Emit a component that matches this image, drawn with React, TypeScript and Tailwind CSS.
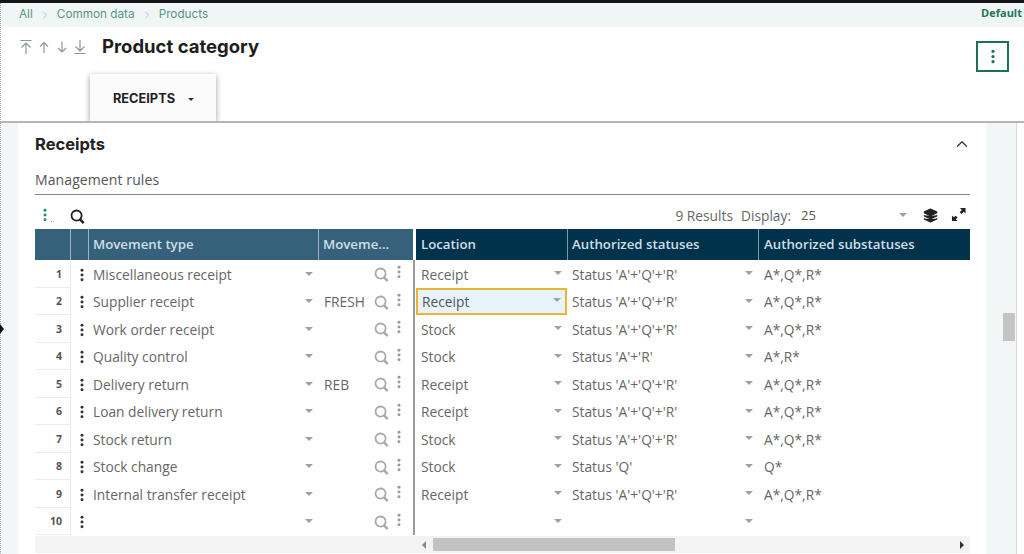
import { ChevronRight, ChevronUp, Layers } from "lucide-react";

const rows = [
  { n: 1, type: "Miscellaneous receipt", code: "", loc: "Receipt", status: "Status 'A'+'Q'+'R'", sub: "A*,Q*,R*" },
  { n: 2, type: "Supplier receipt", code: "FRESH", loc: "Receipt", status: "Status 'A'+'Q'+'R'", sub: "A*,Q*,R*" },
  { n: 3, type: "Work order receipt", code: "", loc: "Stock", status: "Status 'A'+'Q'+'R'", sub: "A*,Q*,R*" },
  { n: 4, type: "Quality control", code: "", loc: "Stock", status: "Status 'A'+'R'", sub: "A*,R*" },
  { n: 5, type: "Delivery return", code: "REB", loc: "Receipt", status: "Status 'A'+'Q'+'R'", sub: "A*,Q*,R*" },
  { n: 6, type: "Loan delivery return", code: "", loc: "Receipt", status: "Status 'A'+'Q'+'R'", sub: "A*,Q*,R*" },
  { n: 7, type: "Stock return", code: "", loc: "Stock", status: "Status 'A'+'Q'+'R'", sub: "A*,Q*,R*" },
  { n: 8, type: "Stock change", code: "", loc: "Stock", status: "Status 'Q'", sub: "Q*" },
  { n: 9, type: "Internal transfer receipt", code: "", loc: "Receipt", status: "Status 'A'+'Q'+'R'", sub: "A*,Q*,R*" },
  { n: 10, type: "", code: "", loc: "", status: "", sub: "" },
];

function Dots({ className }: { className: string }) {
  return (
    <svg viewBox="0 0 4 16" className={className} fill="currentColor">
      <circle cx="2" cy="2.5" r="1.7" />
      <circle cx="2" cy="8" r="1.7" />
      <circle cx="2" cy="13.5" r="1.7" />
    </svg>
  );
}

function Magnifier({ className }: { className: string }) {
  return (
    <svg viewBox="0 0 16 16" className={className} fill="none" stroke="currentColor">
      <circle cx="7" cy="7" r="5.4" strokeWidth="1.9" />
      <path d="M10.8 11 L14.6 15" strokeWidth="2.6" />
    </svg>
  );
}

function Caret({ className = "" }: { className?: string }) {
  return <span className={`h-0 w-0 border-x-[4.5px] border-t-[4.5px] border-x-transparent border-t-[#a0a0a0] ${className}`} />;
}

function ArrowIcon({ d }: { d: string }) {
  return (
    <svg viewBox="0 0 14 16" className="h-4 w-[14px] text-[#8a9a96]" fill="none" stroke="currentColor" strokeWidth="1.2">
      <path d={d} />
    </svg>
  );
}

export default function App() {
  return (
    <div className="relative h-[554px] w-[1024px] overflow-hidden bg-white font-['Open_Sans',sans-serif]">
      {/* barra superior */}
      <div className="h-[3px] bg-[#141414]" />
      <div className="flex h-[24px] items-center justify-between bg-[#f0f5f5] pl-[19px] pr-[2px] font-['Inter',sans-serif] text-[11.75px] text-[#5b9684]">
        <div className="flex items-center">
          <span>All</span>
          <ChevronRight className="mx-[6px] h-3 w-3 text-[#a9b6b2]" strokeWidth={1.5} />
          <span>Common data</span>
          <ChevronRight className="mx-[6px] h-3 w-3 text-[#a9b6b2]" strokeWidth={1.5} />
          <span>Products</span>
        </div>
        <span className="mb-[4px] font-['Open_Sans',sans-serif] text-[11px] font-bold text-[#1f7558]">Default</span>
      </div>

      {/* cabecera */}
      <div className="h-[94px] bg-white">
        <div className="flex h-[47px] items-start pl-[19px] pr-[15px]">
          <div className="mt-[12px] flex w-[83px] items-center gap-[4px]">
            <ArrowIcon d="M1.5 1.5H12.5M7 15V4.5M2.5 8.5L7 4L11.5 8.5" />
            <ArrowIcon d="M7 14V3.5M3 7.5L7 3.5L11 7.5" />
            <ArrowIcon d="M7 2.5V13M3 9L7 13L11 9" />
            <ArrowIcon d="M7 1V11.5M2.5 7.5L7 12L11.5 7.5M1.5 14.5H12.5" />
          </div>
          <h1 className="mt-[6px] font-['Inter',sans-serif] text-[18.5px] font-bold leading-[26px] text-[#1e1e1e]">Product category</h1>
          <div className="ml-auto mt-[14px] flex h-[31px] w-[33px] items-center justify-center border-2 border-[#1f6f57]">
            <Dots className="h-[15px] w-[4px] text-[#1f6f57]" />
          </div>
        </div>
        <div className="ml-[90px] flex h-[47px] w-[126px] items-center gap-[13px] bg-[#fbfbfb] pl-[23px] pt-[3px] font-['Inter',sans-serif] text-[12.75px] font-bold text-[#222] shadow-[0_2px_6px_rgba(0,0,0,0.4)]">
          RECEIPTS
          <span className="mt-[1px] h-0 w-0 border-x-[3px] border-t-[3.5px] border-x-transparent border-t-[#333]" />
        </div>
      </div>
      <div className="h-[2px] bg-[#b5b5b5]" />

      {/* cuerpo */}
      <div className="flex h-[431px]">
        <div className="w-[18px] shrink-0 bg-[#f2f6f6]" />
        <div className="w-[968px] shrink-0 bg-white pl-[17px] pr-[16px]">
          <div className="flex h-[40px] items-center justify-between pt-[2px]">
            <h2 className="font-['Inter',sans-serif] text-[16.5px] font-bold text-[#222]">Receipts</h2>
            <ChevronUp className="mr-[-1px] h-[18px] w-[18px] text-[#333]" strokeWidth={1.6} />
          </div>
          <div className="flex h-[32px] items-center border-b border-[#8a8a8a] pt-[1px] text-[14px] tracking-[0.1px] text-[#555]">Management rules</div>

          {/* barra de herramientas */}
          <div className="flex h-[34px] items-center pl-[8px] pr-[4px] pt-[8px]">
            <Dots className="mb-[2px] h-[14px] w-[4px] text-[#1f8a68]" />
            <span className="ml-[4px] mt-[10px] h-[1px] w-[1px] bg-[#888]" />
            <Magnifier className="ml-[18px] h-[15px] w-[15px] text-[#222]" />
            <span className="ml-auto text-[13.75px] text-[#666]">9 Results</span>
            <span className="ml-[8px] text-[13.75px] text-[#666]">Display:</span>
            <span className="ml-[10px] w-[98px] text-[13px] text-[#555]">25</span>
            <Caret className="mb-[3px]" />
            <Layers className="mb-[1px] ml-[16px] h-[15px] w-[15px] fill-[#222] text-[#222]" strokeWidth={2} />
            <svg viewBox="0 0 16 16" className="mb-[3px] ml-[13px] h-[15px] w-[15px] text-[#222]" fill="currentColor">
              <path d="M9.5 1H15.5V7L13.6 5.1L11.2 7.5L9.2 5.5L11.6 3.1Z" />
              <path d="M1 9V15H7L5.1 13.1L7 11.2L5 9.2L3 11Z" />
            </svg>
          </div>

          {/* tabla */}
          <div className="flex">
            <div className="w-[378px] shrink-0">
              <div className="flex h-[31px] bg-[#35627a] text-[13.25px] font-semibold text-[#cfdfe8]">
                <div className="w-[36px] border-r border-[#9db5c2]" />
                <div className="w-[18px] border-r border-[#9db5c2]" />
                <div className="flex w-[230px] items-center border-r border-[#9db5c2] pl-[4px]">Movement type</div>
                <div className="flex flex-1 items-center pl-[4px]">Moveme...</div>
              </div>
              {rows.map((r) => (
                <div key={r.n} className="flex h-[27.5px] text-[13.75px] text-[#666]">
                  <div className="flex w-[36px] items-center justify-end border-b border-r border-[#ececec] pr-[8px] pt-[3px] text-[10.5px] font-bold text-[#555]">{r.n}</div>
                  <div className="flex w-[18px] items-center justify-center pl-[4px] pt-[2px]">
                    <Dots className="h-[14px] w-[4px] shrink-0 text-[#333]" />
                  </div>
                  <div className="flex w-[230px] items-center justify-between pl-[4px] pr-[5px] pt-[3px]">
                    <span>{r.type}</span>
                    <Caret className="mb-[3px] mr-[1px]" />
                  </div>
                  <div className="flex flex-1 items-center pl-[5px] pr-[12px] pt-[3px]">
                    <span>{r.code}</span>
                    <Magnifier className="mb-[1px] ml-auto h-[15px] w-[15px] text-[#aaa]" />
                    <Dots className="mb-[6px] ml-[8px] h-[14px] w-[4px] text-[#999]" />
                  </div>
                </div>
              ))}
            </div>
            <div className="w-[3px] shrink-0 bg-[#fff] pt-[31px]">
              <div className="h-full w-[2px] bg-[#9a9a9a]" />
            </div>
            <div className="min-w-0 flex-1">
              <div className="flex h-[31px] bg-[#00324c] text-[13.25px] font-semibold text-[#cfdfe8]">
                <div className="flex w-[152px] items-center border-r border-[#7d9aab] pl-[5px]">Location</div>
                <div className="flex w-[191px] items-center border-r border-[#7d9aab] pl-[4px]">Authorized statuses</div>
                <div className="flex flex-1 items-center pl-[5px]">Authorized substatuses</div>
              </div>
              {rows.map((r) => (
                <div key={r.n} className="flex h-[27.5px] text-[13.75px] text-[#666]">
                  {r.n === 2 ? (
                    <div className="flex w-[151px] items-center justify-between border-2 border-[#eab532] bg-[#e6f3fa] pl-[4px] pr-[3px] text-[#555]">
                      <span className="mt-[2px]">{r.loc}</span>
                      <Caret className="mb-[3px] mr-[1px]" />
                    </div>
                  ) : (
                    <div className="flex w-[151px] items-center justify-between pl-[5px] pr-[5px] pt-[3px]">
                      <span>{r.loc}</span>
                      <Caret className="mb-[4px]" />
                    </div>
                  )}
                  <div className="flex w-[192px] items-center justify-between pl-[5px] pr-[6px] pt-[3px]">
                    <span>{r.status}</span>
                    <Caret className="mb-[4px]" />
                  </div>
                  <div className="flex flex-1 items-center pl-[5px] pt-[3px]">{r.sub}</div>
                </div>
              ))}
            </div>
          </div>

          {/* scroll horizontal */}
          <div className="mt-[1px] flex h-[17px] items-center bg-[#f3f3f3] pl-[387px] pr-[6px]">
            <span className="h-0 w-0 border-y-[4px] border-r-[4px] border-y-transparent border-r-[#888]" />
            <div className="ml-[7px] h-[13px] w-[242px] bg-[#c2c2c2]" />
            <span className="ml-auto h-0 w-0 border-y-[4px] border-l-[4px] border-y-transparent border-l-[#333]" />
          </div>
        </div>

        {/* scroll vertical */}
        <div className="w-[31px] shrink-0 border-r border-[#d8d8d8] bg-[#f3f6f6] pl-[17px] pr-[1px] pt-[190px]">
          <div className="h-[28px] bg-[#c4c4c4]" />
        </div>
      </div>

      {/* borde punteado y marca lateral */}
      <div className="absolute left-0 top-[3px] h-[551px] border-l border-dotted border-[#aaa]" />
      <div className="absolute left-0 top-[324px] h-0 w-0 border-y-[5px] border-l-[4px] border-y-transparent border-l-[#111]" />
    </div>
  );
}
